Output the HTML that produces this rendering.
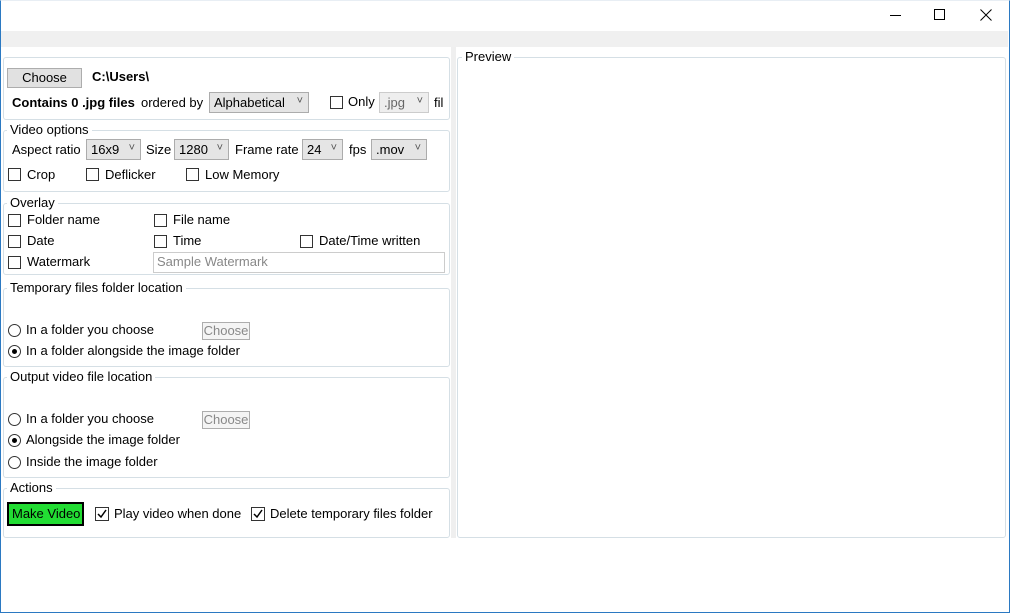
<!DOCTYPE html>
<html><head><meta charset="utf-8"><style>
*{box-sizing:border-box;margin:0;padding:0}
body{width:1010px;height:613px;position:relative;background:#fff;font-family:"Liberation Sans",sans-serif;font-size:13px;color:#000;overflow:hidden}
.a{position:absolute;white-space:nowrap}
.win{position:absolute;left:0;top:0;width:1010px;height:613px;border:1px solid #2b79c2;border-top:1px solid #e8eef4}
.band{position:absolute;left:1px;top:31px;width:1007px;height:16px;background:#f0f0f0}
.split{position:absolute;left:451px;top:47px;width:5px;height:491px;background:#efefef}
.box{position:absolute;border:1px solid #d5dfe5;border-radius:3px}
.lbl{position:absolute;background:#fff;padding:0 3px;line-height:15px;white-space:nowrap}
.cb{position:absolute;width:13px;height:13px;border:1px solid #333;background:#fff}
.rb{position:absolute;width:13px;height:13px;border:1px solid #333;border-radius:50%;background:#fff}
.rb.on::after{content:"";position:absolute;left:3px;top:3px;width:5px;height:5px;border-radius:50%;background:#000}
.dd{position:absolute;height:21px;border:1px solid #acacac;background:#e5e5e5;line-height:19px;padding-left:4px}
.dd::after{content:"˅";position:absolute;right:5px;top:-1px;font-size:11px;color:#555}
.btnd{position:absolute;border:1px solid #adadad;background:#f4f4f4;color:#888;text-align:center;line-height:16px}
</style></head><body>
<div class="win"></div>
<div class="band"></div>
<div class="a" style="left:890px;top:15px;width:11px;height:1px;background:#000"></div>
<div class="a" style="left:934px;top:9px;width:11px;height:11px;border:1px solid #000"></div>
<svg class="a" style="left:980px;top:9px" width="12" height="12"><path d="M0.5 0.5L11.5 11.5M11.5 0.5L0.5 11.5" stroke="#000" stroke-width="1"/></svg>
<div class="split"></div>

<div class="box" style="left:3px;top:57px;width:447px;height:63px"></div>
<div class="a" style="left:7px;top:68px;width:75px;height:20px;border:1px solid #adadad;background:#e1e1e1;text-align:center;line-height:18px">Choose</div>
<div class="a" style="left:92px;top:69px;font-weight:bold">C:\Users\</div>
<div class="a" style="left:12px;top:95px;font-weight:bold">Contains 0 .jpg files</div>
<div class="a" style="left:141px;top:95px">ordered by</div>
<div class="dd" style="left:209px;top:92px;width:100px">Alphabetical</div>
<div class="cb" style="left:330px;top:96px"></div>
<div class="a" style="left:348px;top:94px">Only</div>
<div class="dd" style="left:379px;top:92px;width:50px;color:#666;background:#eee;border-color:#ccc">.jpg</div>
<div class="a" style="left:434px;top:95px">fil</div>

<div class="box" style="left:3px;top:130px;width:447px;height:62px"></div>
<div class="lbl" style="left:7px;top:122px">Video options</div>
<div class="a" style="left:12px;top:142px">Aspect ratio</div>
<div class="dd" style="left:86px;top:139px;width:55px">16x9</div>
<div class="a" style="left:146px;top:142px">Size</div>
<div class="dd" style="left:174px;top:139px;width:55px">1280</div>
<div class="a" style="left:235px;top:142px">Frame rate</div>
<div class="dd" style="left:302px;top:139px;width:41px">24</div>
<div class="a" style="left:349px;top:142px">fps</div>
<div class="dd" style="left:371px;top:139px;width:56px">.mov</div>
<div class="cb" style="left:8px;top:168px"></div><div class="a" style="left:27px;top:167px">Crop</div>
<div class="cb" style="left:86px;top:168px"></div><div class="a" style="left:105px;top:167px">Deflicker</div>
<div class="cb" style="left:186px;top:168px"></div><div class="a" style="left:205px;top:167px">Low Memory</div>

<div class="box" style="left:3px;top:203px;width:447px;height:72px"></div>
<div class="lbl" style="left:7px;top:195px">Overlay</div>
<div class="cb" style="left:8px;top:214px"></div><div class="a" style="left:27px;top:212px">Folder name</div>
<div class="cb" style="left:154px;top:214px"></div><div class="a" style="left:173px;top:212px">File name</div>
<div class="cb" style="left:8px;top:235px"></div><div class="a" style="left:27px;top:233px">Date</div>
<div class="cb" style="left:154px;top:235px"></div><div class="a" style="left:173px;top:233px">Time</div>
<div class="cb" style="left:300px;top:235px"></div><div class="a" style="left:319px;top:233px">Date/Time written</div>
<div class="cb" style="left:8px;top:256px"></div><div class="a" style="left:27px;top:254px">Watermark</div>
<div class="a" style="left:153px;top:252px;width:292px;height:21px;border:1px solid #ccc;color:#888;padding-left:3px;line-height:18px">Sample Watermark</div>

<div class="box" style="left:3px;top:288px;width:447px;height:79px"></div>
<div class="lbl" style="left:7px;top:280px">Temporary files folder location</div>
<div class="rb" style="left:8px;top:324px"></div><div class="a" style="left:26px;top:322px">In a folder you choose</div>
<div class="btnd" style="left:202px;top:322px;width:48px;height:18px">Choose</div>
<div class="rb on" style="left:8px;top:345px"></div><div class="a" style="left:26px;top:343px">In a folder alongside the image folder</div>

<div class="box" style="left:3px;top:377px;width:447px;height:101px"></div>
<div class="lbl" style="left:7px;top:369px">Output video file location</div>
<div class="rb" style="left:8px;top:413px"></div><div class="a" style="left:26px;top:411px">In a folder you choose</div>
<div class="btnd" style="left:202px;top:411px;width:48px;height:18px">Choose</div>
<div class="rb on" style="left:8px;top:434px"></div><div class="a" style="left:26px;top:432px">Alongside the image folder</div>
<div class="rb" style="left:8px;top:456px"></div><div class="a" style="left:26px;top:454px">Inside the image folder</div>

<div class="box" style="left:3px;top:488px;width:447px;height:50px"></div>
<div class="lbl" style="left:7px;top:480px">Actions</div>
<div class="a" style="left:7px;top:502px;width:77px;height:24px;border:2px solid #000;background:#22dd33;line-height:20px;padding-left:3px">Make Video</div>
<svg class="a" style="left:95px;top:507px" width="14" height="14"><rect x="0.5" y="0.5" width="13" height="13" fill="#fff" stroke="#333"/><path d="M3 7l3 3 5-7" stroke="#000" stroke-width="1.5" fill="none"/></svg>
<div class="a" style="left:114px;top:506px">Play video when done</div>
<svg class="a" style="left:251px;top:507px" width="14" height="14"><rect x="0.5" y="0.5" width="13" height="13" fill="#fff" stroke="#333"/><path d="M3 7l3 3 5-7" stroke="#000" stroke-width="1.5" fill="none"/></svg>
<div class="a" style="left:270px;top:506px">Delete temporary files folder</div>

<div class="box" style="left:457px;top:57px;width:549px;height:481px"></div>
<div class="lbl" style="left:462px;top:49px">Preview</div>
</body></html>
